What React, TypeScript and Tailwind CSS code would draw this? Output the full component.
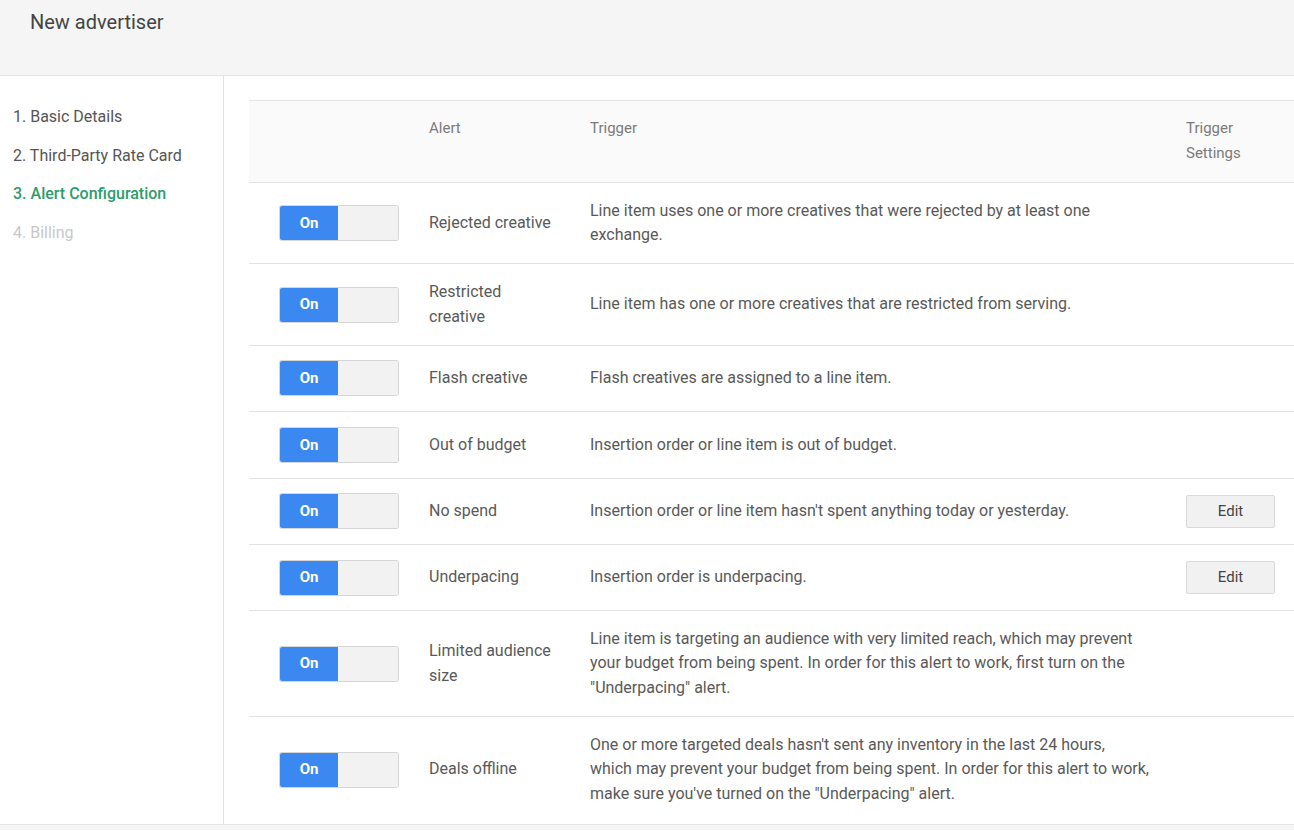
const steps = [
  { label: "1. Basic Details", state: "done" },
  { label: "2. Third-Party Rate Card", state: "done" },
  { label: "3. Alert Configuration", state: "active" },
  { label: "4. Billing", state: "todo" },
];

type Alert = { name: string; trigger: string; edit?: boolean };

const alerts: Alert[] = [
  {
    name: "Rejected creative",
    trigger: "Line item uses one or more creatives that were rejected by at least one exchange.",
  },
  {
    name: "Restricted creative",
    trigger: "Line item has one or more creatives that are restricted from serving.",
  },
  { name: "Flash creative", trigger: "Flash creatives are assigned to a line item." },
  { name: "Out of budget", trigger: "Insertion order or line item is out of budget." },
  {
    name: "No spend",
    trigger: "Insertion order or line item hasn't spent anything today or yesterday.",
    edit: true,
  },
  { name: "Underpacing", trigger: "Insertion order is underpacing.", edit: true },
  {
    name: "Limited audience size",
    trigger:
      'Line item is targeting an audience with very limited reach, which may prevent your budget from being spent. In order for this alert to work, first turn on the "Underpacing" alert.',
  },
  {
    name: "Deals offline",
    trigger:
      'One or more targeted deals hasn\'t sent any inventory in the last 24 hours, which may prevent your budget from being spent. In order for this alert to work, make sure you\'ve turned on the "Underpacing" alert.',
  },
];

function Toggle() {
  return (
    <div className="flex h-[34px] w-[118px] overflow-hidden rounded-[2px] shadow-[0_0_0_1px_#d6d6d6]">
      <div className="flex w-[58px] items-center justify-center bg-[#3b88f0] text-[15px] font-bold text-white">
        On
      </div>
      <div className="flex-1 bg-[#f2f2f2]" />
    </div>
  );
}

export default function App() {
  return (
    <div className="flex h-[830px] flex-col overflow-hidden bg-white font-['Roboto',sans-serif] text-[16px] text-[#595959]">
      <header className="h-[76px] shrink-0 border-b border-[#e3e3e3] bg-[#f5f5f5] pl-[30px] pt-[8px]">
        <h1 className="text-[20px] leading-[28px] text-[#444]">New advertiser</h1>
      </header>

      <div className="flex min-h-0 flex-1">
        <nav className="w-[224px] shrink-0 border-r border-[#e3e3e3] pl-[13px] pt-[22px]">
          {steps.map((s) => (
            <div
              key={s.label}
              className={
                s.state === "active"
                  ? "leading-[38.7px] font-medium text-[#2e9c6c]"
                  : s.state === "todo"
                  ? "leading-[38.7px] text-[#c8c8c8]"
                  : "leading-[38.7px] text-[#555]"
              }
            >
              {s.label}
            </div>
          ))}
        </nav>

        <main className="min-w-0 flex-1 pl-[25px] pt-[24px]">
          <table className="w-full table-fixed border-collapse leading-[24.5px]">
            <colgroup>
              <col className="w-[165px]" />
              <col className="w-[161px]" />
              <col className="w-[596px]" />
              <col />
            </colgroup>
            <thead>
              <tr className="border-y border-[#e3e3e3] bg-[#fafafa] text-left align-top text-[15px] text-[#7a7a7a]">
                <th className="pt-[15px] pb-[17px]" />
                <th className="px-[15px] pt-[15px] pb-[17px] font-normal">Alert</th>
                <th className="px-[15px] pt-[15px] pb-[17px] font-normal">Trigger</th>
                <th className="px-[15px] pt-[15px] pb-[17px] font-normal">
                  Trigger
                  <br />
                  Settings
                </th>
              </tr>
            </thead>
            <tbody>
              {alerts.map((a) => (
                <tr key={a.name} className="border-b border-[#e3e3e3] align-middle last:border-b-0">
                  <td className="py-[15.7px] pl-[31px]">
                    <Toggle />
                  </td>
                  <td className="py-[15.7px] pl-[15px] pr-[18px]">{a.name}</td>
                  <td className="py-[15.7px] pl-[15px] pr-[21px]">{a.trigger}</td>
                  <td className="py-[15.7px] pl-[15px]">
                    {a.edit && (
                      <button className="h-[33px] w-[89px] rounded-[2px] border border-[#d9d9d9] bg-[#f1f1f1] text-[15px] text-[#444]">
                        Edit
                      </button>
                    )}
                  </td>
                </tr>
              ))}
            </tbody>
          </table>
        </main>
      </div>

      <footer className="h-[6px] shrink-0 border-t border-[#e3e3e3] bg-[#f5f5f5]" />
    </div>
  );
}
